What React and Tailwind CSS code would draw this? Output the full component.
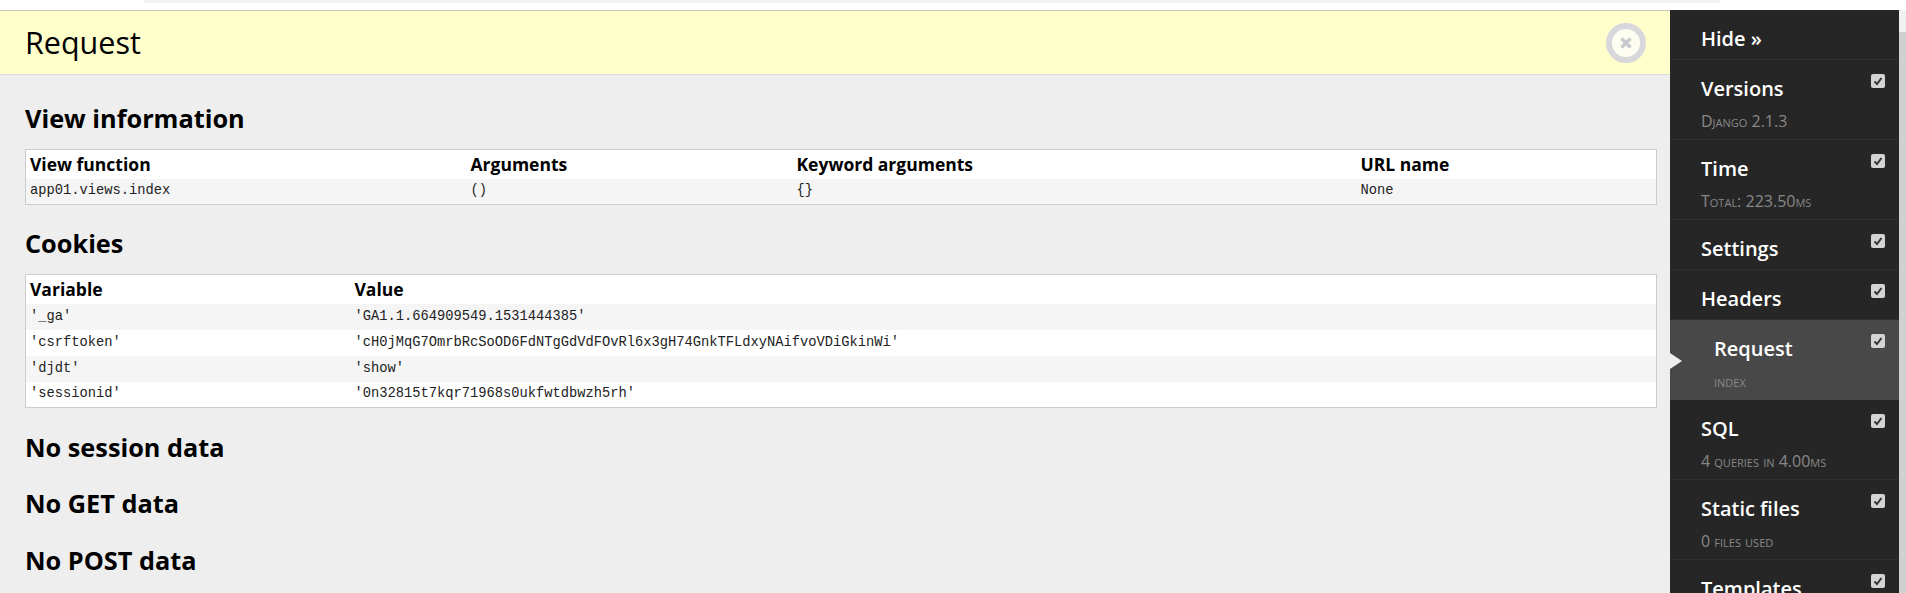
const sans = "font-['Open_Sans','Noto_Sans',sans-serif]"

const panels = [
  { title: 'Versions', sub: 'Django 2.1.3', h: 'h-[80px]' },
  { title: 'Time', sub: 'Total: 223.50ms', h: 'h-[80px]' },
  { title: 'Settings', h: 'h-[50px]' },
  { title: 'Headers', h: 'h-[50px]' },
  { title: 'Request', sub: 'index', h: 'h-[80px]', active: true },
  { title: 'SQL', sub: '4 queries in 4.00ms', h: 'h-[80px]' },
  { title: 'Static files', sub: '0 files used', h: 'h-[80px]' },
  { title: 'Templates', sub: '', h: 'h-[80px]' },
]

const cookies = [
  ["'_ga'", "'GA1.1.664909549.1531444385'"],
  ["'csrftoken'", "'cH0jMqG7OmrbRcSoOD6FdNTgGdVdFOvRl6x3gH74GnkTFLdxyNAifvoVDiGkinWi'"],
  ["'djdt'", "'show'"],
  ["'sessionid'", "'0n32815t7kqr71968s0ukfwtdbwzh5rh'"],
]

const Heading = ({ children, className }) => (
  <h4 className={`text-[25.3px] leading-[32px] font-bold text-black ${className}`}>{children}</h4>
)

const Check = () => (
  <div className="absolute right-[14px] top-[14px] w-[14px] h-[14px] rounded-[2px] bg-[#d4d4d4] flex items-center justify-center">
    <svg width="10" height="10" viewBox="0 0 10 10"><path d="M1.5 5.5 L4 8 L8.5 2" fill="none" stroke="#333" strokeWidth="2" /></svg>
  </div>
)

export default function App() {
  return (
    <div className={`w-[1906px] h-[593px] overflow-hidden bg-white flex flex-col ${sans}`}>
      <div className="h-[10px] shrink-0 bg-white">
        <div className="ml-[144px] w-[1576px] h-[3px] bg-[#f1f3ef]" />
      </div>
      <div className="flex-1 flex min-h-0">
        <div className="flex-1 min-w-0 bg-[#eeeeee] border-t border-[#c9c4b4]">
          <div className="h-[64px] bg-[#ffffcc] border-b border-[#dddddd] flex items-center justify-between pl-[25px] pr-[24px]">
            <h3 className="text-[30.5px] font-normal text-black">Request</h3>
            <div className="w-[40px] h-[40px] rounded-full bg-[#fdfdf2] border-[6px] border-[#d8d8dc] flex items-center justify-center text-[#c9c9cf]">
              <svg width="14" height="14" viewBox="0 0 14 14"><path d="M2.5 2.5 L11.5 11.5 M11.5 2.5 L2.5 11.5" stroke="currentColor" strokeWidth="3.5" /></svg>
            </div>
          </div>
          <div className="pl-[25px] pr-[13px]">
            <Heading className="mt-[27px]">View information</Heading>
            <table className="mt-[15px] w-full table-fixed border border-[#cccccc] bg-white">
              <colgroup><col className="w-[441px]" /><col className="w-[326px]" /><col className="w-[564px]" /><col /></colgroup>
              <thead>
                <tr className="h-[29px] text-[17.5px] text-left"><th className="pl-[4px] font-bold">View function</th><th className="pl-[4px] font-bold">Arguments</th><th className="pl-[4px] font-bold">Keyword arguments</th><th className="pl-[4px] font-bold">URL name</th></tr>
              </thead>
              <tbody>
                <tr className="h-[26px] bg-[#f5f5f5] font-['Liberation_Mono',monospace] text-[13.75px] text-[#222]"><td className="pl-[4px] pt-[1px]">app01.views.index</td><td className="pl-[4px] pt-[1px]">()</td><td className="pl-[4px] pt-[1px]">{'{}'}</td><td className="pl-[4px] pt-[1px]">None</td></tr>
              </tbody>
            </table>
            <Heading className="mt-[22px]">Cookies</Heading>
            <table className="mt-[15px] w-full table-fixed border border-[#cccccc] bg-white">
              <colgroup><col className="w-[325px]" /><col /></colgroup>
              <thead>
                <tr className="h-[29px] text-[17.5px] text-left"><th className="pl-[4px] font-bold">Variable</th><th className="pl-[4px] font-bold">Value</th></tr>
              </thead>
              <tbody className="font-['Liberation_Mono',monospace] text-[13.75px] text-[#222]">
                {cookies.map(([k, v], i) => (
                  <tr key={k} className={`h-[26px] ${i % 2 === 0 ? 'bg-[#f5f5f5]' : 'bg-white'}`}><td className="pl-[4px] pt-[1px]">{k}</td><td className="pl-[4px] pt-[1px]">{v}</td></tr>
                ))}
              </tbody>
            </table>
            <Heading className="mt-[23px]">No session data</Heading>
            <Heading className="mt-[24px]">No GET data</Heading>
            <Heading className="mt-[25px]">No POST data</Heading>
          </div>
        </div>
        <div className="w-[229px] shrink-0 bg-[#262626] text-white">
          <div className="h-[50px] pl-[31px] pt-[8px] flex items-center text-[20px] font-semibold border-b border-[#303030]">Hide »</div>
          {panels.map((p) => (
            <div key={p.title} className={`relative ${p.h} pt-[15px] border-b ${p.active ? 'bg-[#484848] border-[#484848] pl-[44px]' : 'border-[#303030] pl-[31px]'}`}>
              <Check />
              {p.active && <div className="absolute left-0 top-[33px] w-0 h-0 border-y-[8px] border-y-transparent border-l-[12px] border-l-[#eeeeee]" />}
              <div className="text-[20px] leading-[28px] font-semibold">{p.title}</div>
              {p.sub && <div className="mt-[8px] text-[16px] leading-[20px] text-[#888] [font-variant:small-caps]">{p.sub}</div>}
            </div>
          ))}
        </div>
        <div className="w-[7px] shrink-0 bg-[#d0d0d0] flex flex-col">
          <div className="h-[22px] bg-[#f1f1f1]" />
        </div>
      </div>
    </div>
  )
}
